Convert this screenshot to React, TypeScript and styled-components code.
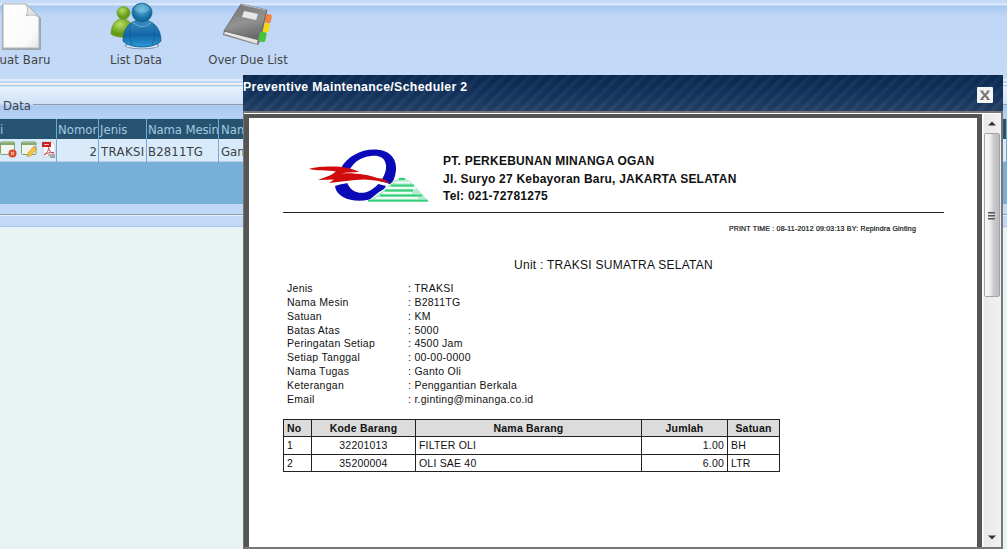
import React from 'react';
import styled, { createGlobalStyle } from 'styled-components';

const GlobalStyle = createGlobalStyle`
  *, *::before, *::after { box-sizing: border-box; }
  html, body, #root { margin: 0; height: 100%; overflow: hidden; }
  body { background: #e8f4f4; color: #424446; font-family: "DejaVu Sans Condensed", "DejaVu Sans", sans-serif; font-stretch: condensed; }
`;

const Screen = styled.div`
  position: relative;
  width: 1007px;
  height: 549px;
  overflow: hidden;
  background: #e8f4f4;
`;

const Toolbar = styled.div`
  display: flex;
  height: 79px;
  padding-top: 2px;
  background: linear-gradient(#c5daf6 0 3px, #d9e8fb 3px 5px, #a6c7f0 6px, #bfd7f5 16px, #c4daf7 79px);
`;

const ToolButton = styled.div<{ $w: number; $shift?: number; $ls?: number }>`
  width: ${p => p.$w}px;
  margin-left: ${p => p.$shift ?? 0}px;
  display: flex;
  flex-direction: column;
  align-items: center;
  font-size: 13px;
  line-height: 17px;
  letter-spacing: ${p => p.$ls ?? 0}px;
  white-space: nowrap;
  svg { display: block; height: 49px; }
`;

const Divider = styled.div`
  height: 8px;
  background: linear-gradient(#e0ecfb 0 2px, #bcd6f5 2px 4px, #f3eff2 4px 6px, #a9c9ec 6px 7px, #d6e6f8 7px 8px);
`;

const Panel = styled.div`
  height: 32px;
  display: flex;
  align-items: center;
  padding: 6px 0 0 3px;
  background: linear-gradient(#e8f2fd 0, #cfe1f8 17px, #a8c8f2 19px, #b6d2f5 30px, #a9cbed 32px);
`;

const Legend = styled.span`
  font-size: 13px;
  line-height: 16px;
  width: 30px;
  white-space: nowrap;
`;

const LegendRule = styled.span`
  flex: 1;
  height: 1px;
  margin-bottom: 3px;
  background: #8d9aa8;
`;

const Grid = styled.div`
  height: 85px;
  background: #78afd9;
`;

const GridRow = styled.div<{ $head?: boolean }>`
  display: grid;
  grid-template-columns: 57px 42px 48px 72px 1fr;
  height: ${p => (p.$head ? 20 : 23)}px;
  font-size: 13px;
  line-height: ${p => (p.$head ? 21 : 25)}px;
  color: ${p => (p.$head ? '#a3c8e0' : '#3b3f43')};
  background: ${p => (p.$head ? '#26536f' : '#d9eafa')};
  border-bottom: ${p => (p.$head ? 0 : 1)}px solid #b5d4ed;
`;

const GridCell = styled.div<{ $right?: boolean; $ls?: number; $pad?: number }>`
  display: flex;
  justify-content: ${p => (p.$right ? 'flex-end' : 'flex-start')};
  padding: 0 1px 0 ${p => p.$pad ?? 1}px;
  border-right: 1px solid #72a9d2;
  letter-spacing: ${p => p.$ls ?? 0}px;
  white-space: nowrap;
`;

const ActionIcons = styled.div`
  display: flex;
  gap: 4px;
  padding-top: 2px;
`;

const PanelFoot = styled.div`
  height: 25px;
  background: linear-gradient(#c1d8f7 0 10px, #8e9bab 10px 11px, #e4effc 11px 12px, #c1d8f7 12px 22px, #a9c6e6 22px 23px, #e5f0fa 23px 25px);
`;

const Dialog = styled.div`
  position: absolute;
  left: 243px;
  top: 75px;
  width: 760px;
  height: 474px;
  display: flex;
  flex-direction: column;
  background: #777;
`;

const TitleBar = styled.div`
  display: flex;
  justify-content: space-between;
  height: 36px;
  padding-right: 10px;
  color: #fff;
  font: bold 12.3px/15px "Liberation Sans", Arial, sans-serif;
  letter-spacing: .33px;
  padding-top: 5px;
  background:
    repeating-linear-gradient(135deg, rgba(7, 31, 64, .2) 0 3px, rgba(60, 96, 137, .14) 5px 6px, rgba(7, 31, 64, .2) 9px),
    linear-gradient(#0c2b53, #16355f 50%, #294769);
`;

const CloseButton = styled.div`
  width: 16px;
  height: 16px;
  margin-top: 7px;
  border-radius: 1px;
  background: #f5f5f5;
  svg { display: block; }
`;

const Viewer = styled.div`
  flex: 1;
  display: flex;
  margin: 2px 2px 2px 1px;
  border-top: 1px solid #fff;
  background: #eee;
`;

const PaperFrame = styled.div`
  width: 738px;
  padding: 4px 5px 0;
  background: #555;
`;

const Paper = styled.div`
  height: 100%;
  padding: 28px 33px 0 34px;
  background: #fff;
  color: #111;
  font-family: "Liberation Sans", Arial, sans-serif;
`;

const Letterhead = styled.div`
  display: flex;
  height: 67px;
  border-bottom: 1px solid #222;
  padding-left: 24px;
  svg { width: 124px; height: 60px; flex: none; }
`;

const Address = styled.div`
  padding: 7px 0 0 12px;
  font-size: 12px;
  font-weight: bold;
  line-height: 17.5px;
  white-space: nowrap;
`;

const Line = styled.div<{ $ls?: number }>`
  letter-spacing: ${p => p.$ls ?? 0}px;
`;

const PrintTime = styled.div`
  margin-top: 11px;
  padding-right: 28px;
  text-align: right;
  font-size: 7px;
  line-height: 10px;
  letter-spacing: .19px;
  -webkit-text-stroke: .2px #111;
`;

const UnitTitle = styled.div`
  margin: 22px 0 0 231px;
  font-size: 12px;
  line-height: 18px;
  letter-spacing: .27px;
`;

const FieldList = styled.div`
  margin: 7px 0 0 4px;
  font-size: 10.5px;
  letter-spacing: .27px;
`;

const Field = styled.div`
  display: grid;
  grid-template-columns: 121px 1fr;
  height: 13.87px;
  line-height: 14px;
`;

const Table = styled.div`
  width: 497px;
  margin-top: 13px;
  border: 1px solid #222;
  border-bottom: 0;
`;

const TableRow = styled.div<{ $head?: boolean }>`
  display: grid;
  grid-template-columns: 28px 104px 226px 86px 1fr;
  height: 17.4px;
  font-size: 10.5px;
  line-height: 17px;
  letter-spacing: .2px;
  font-weight: ${p => (p.$head ? 'bold' : 'normal')};
  background: ${p => (p.$head ? '#dcdcdc' : '#fff')};
  border-bottom: 1px solid #222;
`;

const TableCell = styled.div<{ $align?: string }>`
  padding: 0 3px;
  text-align: ${p => p.$align ?? 'left'};
  border-right: 1px solid #222;
  &:last-child { border-right: 0; }
`;

const ScrollBar = styled.div`
  width: 19px;
  display: flex;
  flex-direction: column;
  align-items: center;
  background: linear-gradient(90deg, #fff 0 1px, #e9e9e9 2px, #f1f1f1);
`;

const ScrollArrow = styled.div<{ $down?: boolean }>`
  height: 19px;
  display: flex;
  align-items: center;
  margin-top: ${p => (p.$down ? 'auto' : '0')};
  svg { transform: ${p => (p.$down ? 'rotate(180deg)' : 'none')}; }
`;

const ScrollThumb = styled.div`
  width: 16px;
  height: 164px;
  border: 1px solid #a4a4a4;
  border-radius: 2px;
  background: linear-gradient(90deg, #fafafa, #e9e9ea 40%, #cdcdd0 60%, #bcbcc0);
  display: flex;
  flex-direction: column;
  align-items: center;
  justify-content: center;
  gap: 2px;
`;

const Grip = styled.span`
  width: 7px;
  height: 1px;
  background: #555;
  box-shadow: 0 1px #999;
`;

const NewIcon = () => (
  <svg width="40" height="49" viewBox="0 0 40 49">
    <defs>
      <linearGradient id="page" x1="0" y1="0" x2="1" y2="1">
        <stop offset="0" stopColor="#fff" /><stop offset=".75" stopColor="#fafafa" /><stop offset="1" stopColor="#e4e4e4" />
      </linearGradient>
    </defs>
    <path d="M1 2H25L40 16V48H1Z" fill="#8f9498" opacity=".75" />
    <path d="M2 2H25L38 15V46H2Z" fill="url(#page)" stroke="#aeb2b5" />
    <path d="M25 2C27 7 27 10 25 14C30 12 34 13 38 15Z" fill="#e2e4e6" stroke="#a5a9ac" strokeWidth=".8" />
  </svg>
);

const PeopleIcon = () => (
  <svg width="52" height="49" viewBox="0 0 52 49">
    <defs>
      <radialGradient id="green" cx=".4" cy=".3"><stop offset="0" stopColor="#b9dd62" /><stop offset="1" stopColor="#649c19" /></radialGradient>
      <radialGradient id="blueHead" cx=".5" cy=".35"><stop offset="0" stopColor="#5cb7dc" /><stop offset="1" stopColor="#146a9f" /></radialGradient>
      <linearGradient id="blueBody" x1="0" y1="0" x2="0" y2="1"><stop offset="0" stopColor="#3c91c4" /><stop offset=".55" stopColor="#1265a5" /><stop offset="1" stopColor="#2c9bd8" /></linearGradient>
    </defs>
    <path d="M1 32C1 24 5 17 12 17S24 22 24 34C17 36 6 36 1 32Z" fill="url(#green)" stroke="#6a9b29" strokeWidth=".7" />
    <circle cx="13.500" cy="11" r="6.500" fill="url(#green)" stroke="#6a9b29" strokeWidth=".7" />
    <ellipse cx="32" cy="43.500" rx="17" ry="3.800" fill="#41566b" opacity=".65" />
    <ellipse cx="32" cy="43.500" rx="16" ry="3" fill="#d5eaf8" />
    <path d="M13 39C13 26 20 18 32 18S51 27 51 39C44 47 20 47 13 39Z" fill="url(#blueBody)" stroke="#155583" strokeWidth=".8" />
    <path d="M21 22C18 28 20 36 22 43M43 22C46 29 44 37 42 43" fill="none" stroke="#12558d" opacity=".6" />
    <path d="M23 20C28 26 36 26 41 20" fill="none" stroke="#8acbe5" opacity=".6" />
    <path d="M22 11C22 -2 42 -2 42 11C41 18 36 20 32 20S23 18 22 11Z" fill="url(#blueHead)" stroke="#176493" strokeWidth=".8" />
    <path d="M24 8C26 0 38 0 40 8C35 12 29 12 24 8Z" fill="#9bd6ea" opacity=".35" />
  </svg>
);

const BookIcon = () => (
  <svg width="52" height="49" viewBox="0 0 52 49">
    <defs>
      <linearGradient id="cover" x1=".2" y1="0" x2=".5" y2="1"><stop offset="0" stopColor="#747474" /><stop offset=".55" stopColor="#929292" /><stop offset="1" stopColor="#686868" /></linearGradient>
    </defs>
    <rect x="43" y="12" width="6.500" height="9" rx="2" fill="#f18642" transform="rotate(12 46 16)" />
    <rect x="40" y="21" width="7.500" height="9" rx="2" fill="#f5d814" transform="rotate(12 43 25)" />
    <path d="M2 28L1 33L36 43L39 38L45 8L41 8Z" fill="#777" />
    <path d="M3 29L2 32L35 42L36 37Z" fill="#e7e7e7" stroke="#999" strokeWidth=".5" />
    <path d="M19 2L45 8L37 38L2 29Z" fill="url(#cover)" stroke="#666" strokeWidth=".8" />
    <rect x="37" y="30" width="7" height="10" rx="2" fill="#48c33c" transform="rotate(12 41 35)" />
    <path d="M19 2.500L44 8" stroke="#bdbdbd" />
    <path d="M22 9L36 12L34 18L20 15Z" fill="#e6e9eb" />
  </svg>
);

const DeleteRowIcon = () => (
  <svg width="17" height="17" viewBox="0 0 17 17">
    <rect x=".5" y="1" width="14" height="12.500" rx="1" fill="#f0f6ee" stroke="#7f9f70" />
    <path d="M1 1.500H14.500V4H1Z" fill="#86aa6c" />
    <circle cx="12.500" cy="12.500" r="4" fill="#d8472b" /><path d="M11 11L14 14M14 11L11 14" stroke="#f3b5a0" strokeWidth="1.200" />
  </svg>
);

const EditRowIcon = () => (
  <svg width="17" height="17" viewBox="0 0 17 17">
    <rect x=".5" y="1" width="14.500" height="12.500" rx="1" fill="#f0f6ee" stroke="#7f9f70" />
    <path d="M1 1.500H15V4H1Z" fill="#86aa6c" />
    <path d="M6 15.500L7 12L13 5L16 8L9.500 15Z" fill="#f0c541" stroke="#c9983a" strokeWidth=".7" />
    <path d="M13 5L16 8L15 9L12 6Z" fill="#d9a08a" />
  </svg>
);

const PdfIcon = () => (
  <svg width="14" height="17" viewBox="0 0 14 17">
    <path d="M1 1H10L13 4V16H1Z" fill="#fcfcfc" stroke="#c9c9c9" strokeWidth=".8" />
    <path d="M0 1H9V6H0Z" fill="#cb2026" />
    <path d="M2 3.500H7" stroke="#f4b7b7" />
    <path d="M2 14C5 12 7 9 6.500 6.500C7 10 9 12 12 12C8 11 5 12 2 14Z" fill="none" stroke="#bb4b50" />
    <path d="M6 14H13M8 16H13" stroke="#666" strokeWidth="1.200" />
  </svg>
);

const CompanyLogo = () => (
  <svg viewBox="307 147 124 60">
    <path fill="#0a0ab8" d="M341 169C347 158 360 150.500 374 150.500C389 150.500 397 159 396 171C395 184 386 194 377 198C366 203 352 203 343 198C338 195 335 191 335 186L347 183C350 193 361 197 371 191C381 185 387 174 386 166C385 158 378 156 371 157C361 158 354 163 350 170Z" />
    <path fill="none" stroke="#fff" strokeWidth="3" d="M333 186C348 181 372 179 393 188" />
    <path fill="#cf0b0b" d="M309 170C319 167 338 167 347 169C352 170 356 171 359 173C352 173.500 346 173 341 174.500C354 173.500 370 176 377 179C383 179 387 182 391 184.500C381 182 373 181 364 180.500C352 180.500 340 183 329 184L334 180.500L318 181L331 176L336 172.500C326 171 317 172 309 170Z" />
    <path fill="#fff" d="M395 183L386 187L384 190L379 193L374 197L368 202H397Z" />
    <path fill="#b5ecd0" d="M402 178L410 182L424 197L429 203H367L384 191L393 182Z" />
    <path stroke="#35cf79" strokeWidth="1.800" d="M399 180H405M391 186.500H414M385 191.500H413M380 196.500H422M368 201.700H428" />
    <path stroke="#fff" strokeWidth="1.600" d="M395 183.500H410M387 189H416M383 194H412M376 199H418" />
  </svg>
);

const Arrow = () => (
  <svg width="8" height="5" viewBox="0 0 8 5"><path d="M0 4.500L4 .5L8 4.500Z" fill="#333" /></svg>
);

const fields = [
  ['Jenis', 'TRAKSI'], ['Nama Mesin', 'B2811TG'], ['Satuan', 'KM'], ['Batas Atas', '5000'],
  ['Peringatan Setiap', '4500 Jam'], ['Setiap Tanggal', '00-00-0000'], ['Nama Tugas', 'Ganto Oli'],
  ['Keterangan', 'Penggantian Berkala'], ['Email', 'r.ginting@minanga.co.id'],
];

const items = [
  ['1', '32201013', 'FILTER OLI', '1.00', 'BH'],
  ['2', '35200004', 'OLI SAE 40', '6.00', 'LTR'],
];

const aligns = ['left', 'center', 'left', 'right', 'left'];

export default function App() {
  return (
    <>
      <GlobalStyle />
      <Screen>
        <Toolbar>
          <ToolButton $w={62} $shift={-10} $ls={.1}><NewIcon />Buat Baru</ToolButton>
          <ToolButton $w={60} $shift={54}><PeopleIcon />List Data</ToolButton>
          <ToolButton $w={90} $shift={37}><BookIcon />Over Due List</ToolButton>
        </Toolbar>
        <Divider />
        <Panel><Legend>Data</Legend><LegendRule /></Panel>
        <Grid>
          <GridRow $head>
            <GridCell $pad={0}>i</GridCell><GridCell>Nomor</GridCell><GridCell>Jenis</GridCell><GridCell $ls={-.15}>Nama Mesin</GridCell><GridCell $pad={2}>Nama</GridCell>
          </GridRow>
          <GridRow>
            <GridCell $pad={0}><ActionIcons><DeleteRowIcon /><EditRowIcon /><PdfIcon /></ActionIcons></GridCell>
            <GridCell $right>2</GridCell><GridCell $pad={2} $ls={.4}>TRAKSI</GridCell><GridCell $ls={.15}>B2811TG</GridCell><GridCell $pad={2}>Ganto</GridCell>
          </GridRow>
        </Grid>
        <PanelFoot />

        <Dialog>
          <TitleBar>
            Preventive Maintenance/Scheduler 2
            <CloseButton>
              <svg width="16" height="16" viewBox="0 0 16 16"><path d="M4.500 4.500L11.500 12M11.500 4.500L4.500 12" stroke="#777" strokeWidth="2" /><path d="M3 4H6.500M9.500 4H13M3 12.500H6.500M9.500 12.500H13" stroke="#777" /></svg>
            </CloseButton>
          </TitleBar>
          <Viewer>
            <PaperFrame>
              <Paper>
                <Letterhead>
                  <CompanyLogo />
                  <Address>
                    <Line $ls={.24}>PT. PERKEBUNAN MINANGA OGAN</Line>
                    <Line $ls={.21}>Jl. Suryo 27 Kebayoran Baru, JAKARTA SELATAN</Line>
                    <Line $ls={.22}>Tel: 021-72781275</Line>
                  </Address>
                </Letterhead>
                <PrintTime>PRINT TIME : 08-11-2012 09:03:13 BY: Repindra Ginting</PrintTime>
                <UnitTitle>Unit : TRAKSI SUMATRA SELATAN</UnitTitle>
                <FieldList>
                  {fields.map(([label, value]) => (
                    <Field key={label}><span>{label}</span><span>: {value}</span></Field>
                  ))}
                </FieldList>
                <Table>
                  <TableRow $head>
                    {['No', 'Kode Barang', 'Nama Barang', 'Jumlah', 'Satuan'].map((h, i) => (
                      <TableCell key={h} $align={i ? 'center' : 'left'}>{h}</TableCell>
                    ))}
                  </TableRow>
                  {items.map(row => (
                    <TableRow key={row[0]}>
                      {row.map((value, i) => <TableCell key={i} $align={aligns[i]}>{value}</TableCell>)}
                    </TableRow>
                  ))}
                </Table>
              </Paper>
            </PaperFrame>
            <ScrollBar>
              <ScrollArrow><Arrow /></ScrollArrow>
              <ScrollThumb><Grip /><Grip /><Grip /></ScrollThumb>
              <ScrollArrow $down><Arrow /></ScrollArrow>
            </ScrollBar>
          </Viewer>
        </Dialog>
      </Screen>
    </>
  );
}
